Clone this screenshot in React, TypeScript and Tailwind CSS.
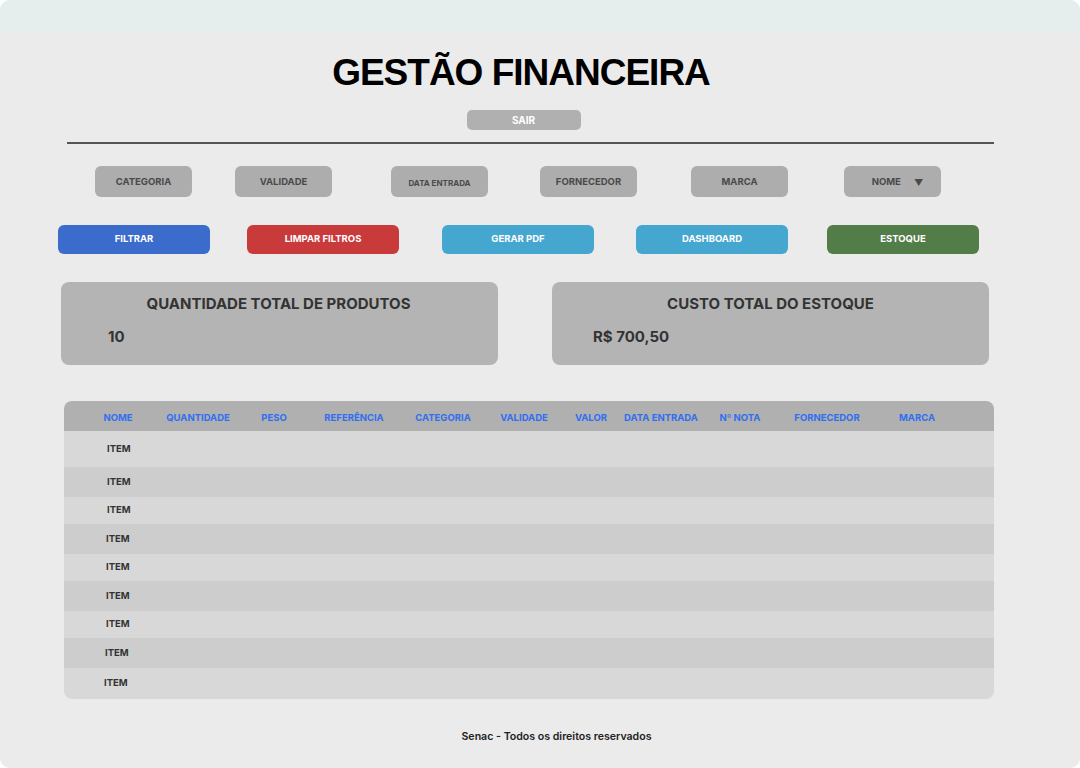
const filtros = [
  { label: "CATEGORIA", ml: "ml-[95px]" },
  { label: "VALIDADE", ml: "ml-[43px]" },
  { label: "DATA ENTRADA", ml: "ml-[59px]", small: true },
  { label: "FORNECEDOR", ml: "ml-[52px]" },
  { label: "MARCA", ml: "ml-[54px]" },
  { label: "NOME", ml: "ml-[56px]", select: true },
];

const acoes = [
  { label: "FILTRAR", cls: "ml-[58px] bg-[#3b6bcb]" },
  { label: "LIMPAR FILTROS", cls: "ml-[37px] bg-[#c93a3a]" },
  { label: "GERAR PDF", cls: "ml-[43px] bg-[#45a6cf]" },
  { label: "DASHBOARD", cls: "ml-[42px] bg-[#45a6cf]" },
  { label: "ESTOQUE", cls: "ml-[39px] bg-[#527c48]" },
];

// larguras escolhidas para que o centro de cada título caia no lugar certo
const colunas = [
  { label: "NOME", w: "w-[108px]" },
  { label: "QUANTIDADE", w: "w-[52px]" },
  { label: "PESO", w: "w-[100px]" },
  { label: "REFERÊNCIA", w: "w-[60px]" },
  { label: "CATEGORIA", w: "w-[118px]" },
  { label: "VALIDADE", w: "w-[44px]" },
  { label: "VALOR", w: "w-[90px]" },
  { label: "DATA ENTRADA", w: "w-[50px]" },
  { label: "Nº NOTA", w: "w-[108px]" },
  { label: "FORNECEDOR", w: "w-[66px]" },
  { label: "MARCA", w: "w-[114px]" },
];

const linhas = [
  { h: "h-[36px]", bg: "bg-[#d8d8d8]", pl: "pl-[43px]" },
  { h: "h-[30px]", bg: "bg-[#cdcdcd]", pl: "pl-[43px]" },
  { h: "h-[27px]", bg: "bg-[#d8d8d8]", pl: "pl-[43px]" },
  { h: "h-[30px]", bg: "bg-[#cdcdcd]", pl: "pl-[42px]" },
  { h: "h-[27px]", bg: "bg-[#d8d8d8]", pl: "pl-[42px]" },
  { h: "h-[30px]", bg: "bg-[#cdcdcd]", pl: "pl-[42px]" },
  { h: "h-[27px]", bg: "bg-[#d8d8d8]", pl: "pl-[42px]" },
  { h: "h-[30px]", bg: "bg-[#cdcdcd]", pl: "pl-[41px]" },
  { h: "h-[31px]", bg: "bg-[#d8d8d8]", pl: "pl-[40px]" },
];

export default function App() {
  return (
    <div className="w-[1080px] h-[768px] bg-white font-['Inter',sans-serif]">
      <div className="w-full h-full rounded-[10px] overflow-hidden bg-[#ebebeb] flex flex-col">
        {/* Barra superior */}
        <div className="h-[33px] bg-[#e5eded]" />

        {/* Título */}
        <h1 className="mt-[22px] h-[34px] flex items-center justify-center pr-[38px] font-['Liberation_Sans',Arial,sans-serif] font-bold text-[37px] tracking-[-1px] text-black leading-none">
          GESTÃO FINANCEIRA
        </h1>

        <div className="mt-[21px] flex justify-center pr-[33px]">
          <button className="w-[114px] h-[20px] rounded-[5px] bg-[#b0b0b0] text-white text-[10px] font-bold">
            SAIR
          </button>
        </div>

        <div className="mt-[12px] ml-[67px] w-[927px] h-[2px] bg-[#555555]" />

        {/* Filtros */}
        <div className="mt-[22px] flex">
          {filtros.map((f) => (
            <div
              key={f.label}
              className={`${f.ml} w-[97px] h-[31px] pt-[2px] rounded-[6px] bg-[#adadad] flex items-center justify-center gap-[13px] font-bold text-[#4a4a4a] ${
                f.small ? "text-[8px]" : "text-[9.5px]"
              }`}
            >
              <span className={f.select ? "ml-[10px]" : ""}>{f.label}</span>
              {f.select && <span className="text-[9px]">▼</span>}
            </div>
          ))}
        </div>

        {/* Ações */}
        <div className="mt-[28px] flex">
          {acoes.map((a) => (
            <button
              key={a.label}
              className={`${a.cls} w-[152px] h-[29px] rounded-[6px] text-white text-[9.5px] font-bold`}
            >
              {a.label}
            </button>
          ))}
        </div>

        {/* Resumo */}
        <div className="mt-[28px] flex">
          <div className="ml-[61px] w-[437px] h-[83px] rounded-[8px] bg-[#b4b4b4] text-[#333333] font-bold text-[15px]">
            <p className="mt-[11px] text-center pr-[2px]">QUANTIDADE TOTAL DE PRODUTOS</p>
            <p className="mt-[10px] ml-[47px]">10</p>
          </div>
          <div className="ml-[54px] w-[437px] h-[83px] rounded-[8px] bg-[#b4b4b4] text-[#333333] font-bold text-[15px]">
            <p className="mt-[11px] text-center">CUSTO TOTAL DO ESTOQUE</p>
            <p className="mt-[10px] ml-[41px]">R$ 700,50</p>
          </div>
        </div>

        {/* Tabela */}
        <div className="mt-[36px] ml-[64px] w-[930px] rounded-[8px] overflow-hidden">
          <div className="h-[30px] pt-[4px] bg-[#b0b0b0] flex items-center text-[9.5px] font-bold text-[#2f6ff0]">
            {colunas.map((c) => (
              <span key={c.label} className={`${c.w} shrink-0 flex justify-center whitespace-nowrap`}>
                {c.label}
              </span>
            ))}
          </div>
          {linhas.map((l, i) => (
            <div
              key={i}
              className={`${l.h} ${l.bg} ${l.pl} flex items-center text-[9.5px] font-bold text-[#333333]`}
            >
              ITEM
            </div>
          ))}
        </div>

        <p className="mt-[30px] text-center pl-[33px] text-[10.6px] font-semibold text-[#222222]">
          Senac - Todos os direitos reservados
        </p>
      </div>
    </div>
  );
}
